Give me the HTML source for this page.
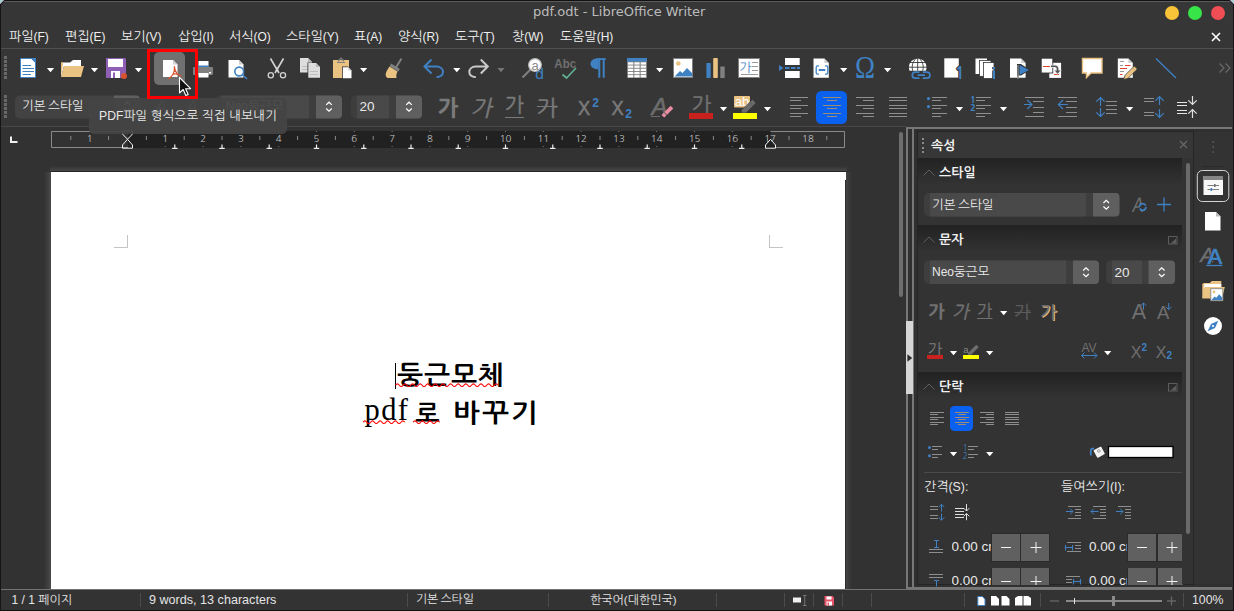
<!DOCTYPE html><html lang="ko"><head><meta charset="utf-8"><title>pdf.odt - LibreOffice Writer</title><style>
html,body{margin:0;padding:0;background:#000;}
body{width:1234px;height:611px;overflow:hidden;position:relative;font-family:"Liberation Sans","NanumGothic","Noto Sans CJK KR",sans-serif;font-size:13px;color:#e6e6e6;}
#win{position:absolute;left:0;top:0;width:1234px;height:611px;background:#363636;overflow:hidden;}
.abs{position:absolute;}
.t{position:absolute;white-space:nowrap;line-height:1;}
svg{position:absolute;overflow:visible;}
</style></head><body><div id="win">
<div class="t" style="left:533px;top:5.0px;font-size:13px;color:#bcbcbc;font-family:'DejaVu Sans','Liberation Sans',sans-serif;">pdf.odt - LibreOffice Writer</div><div class="abs" style="left:1165px;top:6px;width:14px;height:14px;background:#f9c339;border-radius:50%;"></div><div class="abs" style="left:1188px;top:6px;width:14px;height:14px;background:#37e549;border-radius:50%;"></div><div class="abs" style="left:1211px;top:6px;width:14px;height:14px;background:#f14d55;border-radius:50%;"></div>
<div class="t" style="left:9px;top:30.1px;font-size:13px;color:#f0f0f0;">파일<span style="font-size:0.92em">(F)</span></div><div class="t" style="left:65px;top:30.1px;font-size:13px;color:#f0f0f0;">편집<span style="font-size:0.92em">(E)</span></div><div class="t" style="left:121px;top:30.1px;font-size:13px;color:#f0f0f0;">보기<span style="font-size:0.92em">(V)</span></div><div class="t" style="left:178px;top:30.1px;font-size:13px;color:#f0f0f0;">삽입<span style="font-size:0.92em">(I)</span></div><div class="t" style="left:229px;top:30.1px;font-size:13px;color:#f0f0f0;">서식<span style="font-size:0.92em">(O)</span></div><div class="t" style="left:286px;top:30.1px;font-size:13px;color:#f0f0f0;">스타일<span style="font-size:0.92em">(Y)</span></div><div class="t" style="left:354px;top:30.1px;font-size:13px;color:#f0f0f0;">표<span style="font-size:0.92em">(A)</span></div><div class="t" style="left:398px;top:30.1px;font-size:13px;color:#f0f0f0;">양식<span style="font-size:0.92em">(R)</span></div><div class="t" style="left:455px;top:30.1px;font-size:13px;color:#f0f0f0;">도구<span style="font-size:0.92em">(T)</span></div><div class="t" style="left:512px;top:30.1px;font-size:13px;color:#f0f0f0;">창<span style="font-size:0.92em">(W)</span></div><div class="t" style="left:560px;top:30.1px;font-size:13px;color:#f0f0f0;">도움말<span style="font-size:0.92em">(H)</span></div><svg style="left:1211px;top:32px" width="10" height="10"><path d="M1 1L9 9M9 1L1 9" stroke="#fff" stroke-width="1.6" fill="none"/></svg><div class="abs" style="left:1px;top:48px;width:1232px;height:1px;background:#505050;"></div>
<svg style="left:0;top:0" width="1234" height="130" viewBox="0 0 1234 130"><rect x="4" y="56" width="3" height="3" fill="#686868"/><rect x="4" y="60" width="3" height="3" fill="#686868"/><rect x="4" y="64" width="3" height="3" fill="#686868"/><rect x="4" y="68" width="3" height="3" fill="#686868"/><rect x="4" y="72" width="3" height="3" fill="#686868"/><rect x="4" y="76" width="3" height="3" fill="#686868"/><path d="M20.5,58.5h11l4,4v15h-15z" fill="#ffffff" stroke="#3f81c3"/><path d="M30.500,58h5.500v5.500z" fill="#3f81c3"/><path d="M22.500,65.500h8.500M22.500,68.500h11.500M22.500,71.500h11.500M22.500,74.500h8.500" stroke="#3f81c3" stroke-width="1.200"/><path d="M46.9,68h7.2l-3.6,4.2z" fill="#ffffff"/><path d="M61,77v-13.5l2,-1h7l3,-2.5h8v6h-17z" fill="#fff"/><path d="M61,77l0,-14.5l2,-0.5v3l-1.5,8z" fill="#eac282"/><path d="M61,77l3,-11h20l-3,11z" fill="#eac282"/><path d="M90.9,68h7.2l-3.6,4.2z" fill="#ffffff"/><path d="M106,58h19l1,1v19h-20z" fill="#8f5fb5"/><rect x="108" y="59" width="15" height="8" fill="#fff"/><rect x="111" y="71" width="9" height="7" fill="#fff"/><rect x="113" y="72.5" width="2" height="5.5" fill="#8f5fb5"/><circle cx="124" cy="76" r="3" fill="#d9532c"/><path d="M134.9,68h7.2l-3.6,4.2z" fill="#ffffff"/><rect x="154" y="52" width="31" height="33" rx="5" fill="#707070"/><path d="M163,60h10l4.5,4.5v12.5h-14.500z" fill="#fff"/><path d="M173,60v4.500h4.500z" fill="#d0d0d0"/><path d="M174.400,66.600c0.300,3 -0.200,5.400 -1.400,7.600c-1,1.800 -2.500,3.400 -4.200,4.600M173,74.200c2.500,-0.700 5.500,0 8,1.700M174.400,66.600c0.200,2.500 1,4.800 2.400,6.600" stroke="#d9532c" stroke-width="1.200" fill="none" stroke-linecap="round"/><rect x="198.500" y="61" width="10" height="5" fill="#fff"/><path d="M198,65.500h11v2h-11z" fill="#3f81c3"/><rect x="193" y="67" width="20" height="8" rx="1" fill="#808080"/><rect x="198.500" y="73" width="10" height="4.500" fill="#fff"/><rect x="209" y="72" width="2" height="1.500" fill="#fff"/><path d="M228.5,60h10.5l4.5,4.5v13.0h-15z" fill="#ffffff"/><path d="M239.0,60v4.5h4.5z" fill="#d0d0d0"/><circle cx="239.200" cy="71.500" r="4.400" fill="#fff" stroke="#3f81c3" stroke-width="1.600"/><path d="M242.300,74.700l4.800,4.300" stroke="#3f81c3" stroke-width="1.600"/><path d="M270.500,58.500l8.500,14.500M283.500,58.500l-8.500,14.500" stroke="#d4d4d4" stroke-width="1.600" fill="none"/><path d="M277,66.500l-1.800,4.500l1.800,-1.500l1.800,1.500z" fill="#d4d4d4"/><circle cx="270.800" cy="75.300" r="2.600" fill="none" stroke="#d4d4d4" stroke-width="1.300"/><circle cx="283" cy="75.300" r="2.600" fill="none" stroke="#d4d4d4" stroke-width="1.300"/><path d="M300,58h8l4,4v10.5h-12z" fill="#dedede"/><path d="M308,58v4h4z" fill="#b8b8b8"/><path d="M302,66.500h8M302,69.500h8" stroke="#bdbdbd"/><path d="M307.500,62.500h8.500l4.500,4.500v11h-13z" fill="#333"/><path d="M308.3,63h7.699999999999999l4,4v10.7h-11.7z" fill="#dedede"/><path d="M316.0,63v4h4z" fill="#b8b8b8"/><path d="M310,71.500h8M310,74.500h8" stroke="#bdbdbd"/><rect x="333" y="60" width="16" height="18" fill="#eac282"/><path d="M337,62.500h8M338.500,61.500v-1.500h1.500c0,-2.500 2,-2.500 2,0h1.500v1.500" stroke="#808080" fill="none" stroke-width="1.200"/><path d="M342,66.500h6l4,4v8.500h-10z" fill="#333"/><path d="M342.8,67.3h5.499999999999999l3.2,3.2v7.8h-8.7z" fill="#ffffff"/><path d="M348.3,67.3v3.2h3.2z" fill="#c8c8c8"/><path d="M360.0,68h7.2l-3.6,4.2z" fill="#ffffff"/><path d="M401.500,58.500l-5.500,9" stroke="#808080" stroke-width="2"/><path d="M391.200,63.600l8.600,5.400l-1.500,2.600l-8.600,-5.400z" fill="#808080"/><path d="M389.500,66.500l8,5c-1,2 -1.500,4 -1,6.500h-9c-2.500,-1.500 -2,-5 -0.500,-7.500z" fill="#eac282"/><path d="M431.500,59.500l-7,7l7,7M424.500,66.500h12c4,0 6.500,2.500 6.500,5.500s-3,5.500 -6.500,5" stroke="#3f81c3" stroke-width="2" fill="none"/><path d="M453.2,68h7.2l-3.6,4.2z" fill="#ffffff"/><path d="M480.800,59.500l7,7l-7,7M487.800,66.500h-12c-4,0 -6.500,2.500 -6.500,5.500s3,5.500 6.500,5" stroke="#c9c9c9" stroke-width="2" fill="none"/><path d="M497.4,68h7.2l-3.6,4.2z" fill="#767676"/><path d="M530.500,69.500l-8,8" stroke="#808080" stroke-width="2"/><circle cx="535" cy="65" r="6.300" fill="#fff" stroke="#bdbdbd" stroke-width="1.300"/><text x="535" y="69.500" font-size="13" text-anchor="middle" fill="#8a8a8a" font-family="Liberation Sans,sans-serif">a</text><text x="539.500" y="79" font-size="15.500" text-anchor="middle" fill="#3f81c3" font-family="Liberation Sans,sans-serif">d</text><text x="565.200" y="68" font-size="13" font-weight="bold" text-anchor="middle" fill="#707070" font-family="Liberation Sans,sans-serif" textLength="21.700" lengthAdjust="spacingAndGlyphs">Abc</text><path d="M562.500,74.500l4,3.500l9.500,-10" stroke="#5fb090" stroke-width="1.700" fill="none"/><path d="M598.500,58.200c-5.500,0 -8,2.500 -8,5.500s2.500,5.500 8,5.500z" fill="#3f81c3"/><path d="M597,59.100h8.700" stroke="#3f81c3" stroke-width="1.800" fill="none"/><path d="M599.300,58.500v19.300M603.700,58.500v19.300" stroke="#3f81c3" stroke-width="2" fill="none"/><rect x="627" y="58" width="20" height="20" fill="#808080"/><rect x="627" y="58" width="20" height="3.500" fill="#3f81c3"/><rect x="628.00" y="62.30" width="5.300" height="2.300" fill="#fff"/><rect x="634.33" y="62.30" width="5.300" height="2.300" fill="#fff"/><rect x="640.66" y="62.30" width="5.300" height="2.300" fill="#fff"/><rect x="628.00" y="65.50" width="5.300" height="2.300" fill="#fff"/><rect x="634.33" y="65.50" width="5.300" height="2.300" fill="#fff"/><rect x="640.66" y="65.50" width="5.300" height="2.300" fill="#fff"/><rect x="628.00" y="68.70" width="5.300" height="2.300" fill="#fff"/><rect x="634.33" y="68.70" width="5.300" height="2.300" fill="#fff"/><rect x="640.66" y="68.70" width="5.300" height="2.300" fill="#fff"/><rect x="628.00" y="71.90" width="5.300" height="2.300" fill="#fff"/><rect x="634.33" y="71.90" width="5.300" height="2.300" fill="#fff"/><rect x="640.66" y="71.90" width="5.300" height="2.300" fill="#fff"/><rect x="628.00" y="75.10" width="5.300" height="2.300" fill="#fff"/><rect x="634.33" y="75.10" width="5.300" height="2.300" fill="#fff"/><rect x="640.66" y="75.10" width="5.300" height="2.300" fill="#fff"/><path d="M656.0,68h7.2l-3.6,4.2z" fill="#ffffff"/><rect x="673.500" y="58.500" width="19" height="19" fill="#fff" stroke="#808080"/><circle cx="678.300" cy="63.500" r="2.300" fill="#eac282"/><path d="M674.500,76.500l5.500,-5.500l2.500,2l4.500,-5l5,5v3.500z" fill="#3f81c3"/><rect x="706.400" y="63" width="4.300" height="15" fill="#3f81c3"/><rect x="713.200" y="58" width="4.600" height="20" rx="0.800" fill="#eac282"/><rect x="720.300" y="66.500" width="4.400" height="11.500" fill="#808080"/><rect x="738.500" y="58.500" width="21" height="19" fill="#fff" stroke="#808080"/><text x="745.500" y="71.500" font-size="12.500" text-anchor="middle" fill="#3f81c3" font-family="NanumGothic,sans-serif">가</text><path d="M752,62.500h6M752,66.500h6M752,70.500h6M741,74.500h17" stroke="#808080" stroke-width="0.800"/><rect x="785" y="58" width="14.700" height="7" fill="#fff"/><rect x="785" y="71" width="14.700" height="7" fill="#fff"/><path d="M785,68h15" stroke="#3f81c3" stroke-width="2" stroke-dasharray="4.500,1.500"/><path d="M779,65l4.500,3l-4.500,3z" fill="#3f81c3"/><path d="M813.5,58.5h10.8l4.5,4.5v14.8h-15.3z" fill="#ffffff"/><path d="M824.3,58.5v4.5h4.5z" fill="#cfcfcf"/><path d="M819,65.800h-1.300a1.500,1.500 0 0 0 -1.500,1.500v5.400a1.500,1.500 0 0 0 1.500,1.500h1.300M825,65.800h1.300a1.500,1.500 0 0 1 1.500,1.500v5.400a1.500,1.500 0 0 1 -1.500,1.500h-1.300" stroke="#3f81c3" fill="none" stroke-width="1.300"/><path d="M818.700,70h6.600" stroke="#3f81c3" stroke-width="2"/><path d="M840.1,68h7.2l-3.6,4.2z" fill="#ffffff"/><text x="865" y="77.900" font-size="32.500" text-anchor="middle" fill="#3f81c3" font-family="Liberation Serif,serif" textLength="20" lengthAdjust="spacingAndGlyphs">Ω</text><path d="M884.0,68h7.2l-3.6,4.2z" fill="#ffffff"/><clipPath id="gc"><rect x="905" y="55" width="26" height="15.700"/></clipPath><g clip-path="url(#gc)"><circle cx="917.700" cy="67.300" r="8.800" fill="#fff"/><path d="M908,67.200h20M909.500,62.500h16.500M917.700,58v13M913.200,72c-2,-4.500 -1,-10 2.800,-13.500M922.200,72c2,-4.500 1,-10 -2.800,-13.500" stroke="#363636" stroke-width="0.900" fill="none"/></g><path d="M919.500,72.200h-4.200a3,3 0 0 0 0,6h4.200M922.700,72.200h4.200a3,3 0 0 1 0,6h-4.200M917.500,75.200h7.500" stroke="#3f81c3" fill="none" stroke-width="1.700"/><path d="M944.300,58.300h14.500v19.300h-14.500z" fill="#fff"/><text x="959.800" y="79" font-size="17" font-weight="bold" text-anchor="middle" fill="#3f81c3" stroke="#363636" stroke-width="2.200" paint-order="stroke" font-family="NanumGothic,sans-serif">1</text><rect x="975.500" y="58.500" width="11.500" height="15.500" fill="#fff"/><rect x="979.500" y="60.500" width="11.500" height="15.800" fill="#fff" stroke="#363636" stroke-width="0.800"/><rect x="983.500" y="62.500" width="10.500" height="16" fill="#fff" stroke="#363636" stroke-width="0.800"/><path d="M994,67v2.200M994,70.500v8.500" stroke="#363636" stroke-width="3.600"/><path d="M994,67v2.200M994,70.500v8.500" stroke="#3f81c3" stroke-width="2"/><path d="M1010,58.5h11.1l4.5,4.5v14.8h-15.6z" fill="#ffffff"/><path d="M1021.0999999999999,58.5v4.5h4.5z" fill="#cfcfcf"/><path d="M1017,64h4l9,6l-9,5.500h-4z" fill="#333"/><path d="M1018,65v14" stroke="#808080" stroke-width="1.600"/><path d="M1019.500,65l9.500,5l-9.500,5z" fill="#3f81c3"/><rect x="1049.300" y="62.800" width="11.800" height="15.100" fill="#fff"/><rect x="1041.200" y="58.200" width="11.600" height="14.800" fill="#fff" stroke="#363636" stroke-width="0.900"/><path d="M1043,66.500h7M1054,74.500h5" stroke="#e0452c" stroke-width="1"/><path d="M1051,66.300h4c2,0 2.600,1 2.600,3v2" stroke="#e8e8e8" stroke-width="3" fill="none"/><path d="M1053.300,70h8.400l-4.200,4.800z" fill="#e8e8e8"/><path d="M1051,66.300h4c2,0 2.600,1 2.600,3v2" stroke="#555" stroke-width="1.600" fill="none"/><path d="M1054.800,70.600h5.600l-2.800,3.200z" fill="#555"/><path d="M1082.500,58.500h19.500v14.500h-11l-4.500,4.500v-4.500h-4z" fill="#fff" stroke="#eac282" stroke-width="1.400"/><path d="M1117.8,58.5h10.5l4.5,4.5v14.8h-15z" fill="#ffffff"/><path d="M1128.3,58.5v4.5h4.5z" fill="#cfcfcf"/><path d="M1120,61.500h4M1120,65.500h3M1120,71.500h4" stroke="#9a9a9a" stroke-width="1"/><path d="M1125,65.500h5.500M1120,68.500h7M1120,74.500h2.500" stroke="#e0452c" stroke-width="1.100"/><path d="M1134.300,66l3,3l-9.300,9.300l-4.300,1.300l1.300,-4.300z" fill="#eac282" stroke="#363636" stroke-width="0.700"/><path d="M1132.600,67.700l3,3" stroke="#c9a468" stroke-width="0.900"/><path d="M1156,58.500l20,19.500" stroke="#3f81c3" stroke-width="1.300"/><path d="M1219.500,63.500l4.500,4.500l-4.500,4.500M1225.500,63.500l4.500,4.500l-4.500,4.500" stroke="#686868" stroke-width="1.300" fill="none"/></svg>
<svg style="left:0;top:0" width="1234" height="130" viewBox="0 0 1234 130"><rect x="4" y="95" width="3" height="3" fill="#686868"/><rect x="4" y="99" width="3" height="3" fill="#686868"/><rect x="4" y="103" width="3" height="3" fill="#686868"/><rect x="4" y="107" width="3" height="3" fill="#686868"/><rect x="4" y="111" width="3" height="3" fill="#686868"/><rect x="4" y="115" width="3" height="3" fill="#686868"/><rect x="15" y="95.500" width="125" height="23" rx="5" fill="#434343"/><path d="M114,95.500h22a4,4 0 0 1 4,4v15a4,4 0 0 1 -4,4h-22z" fill="#5f5f5f"/><path d="M124.2,104.9l2.800,-2.700l2.800,2.700M124.2,108.5l2.800,2.700l2.800,-2.700" stroke="#ffffff" stroke-width="1.200" fill="none"/><text x="161" y="113" font-size="18" text-anchor="middle" fill="#8a8a8a" font-family="Liberation Sans,sans-serif" font-style="italic">A</text><text x="192" y="113" font-size="18" text-anchor="middle" fill="#8a8a8a" font-family="Liberation Sans,sans-serif" font-style="italic">A</text><rect x="215" y="95.500" width="127" height="23" rx="5" fill="#3e3e3e"/><rect x="221" y="95.500" width="88" height="23" fill="#494949"/><path d="M316,95.500h22a4,4 0 0 1 4,4v15a4,4 0 0 1 -4,4h-22z" fill="#5f5f5f"/><path d="M326.2,104.9l2.800,-2.700l2.800,2.700M326.2,108.5l2.800,2.700l2.800,-2.700" stroke="#ffffff" stroke-width="1.200" fill="none"/><rect x="351" y="95.500" width="71" height="23" rx="5" fill="#3e3e3e"/><rect x="357" y="95.500" width="32" height="23" fill="#494949"/><path d="M396,95.500h22a4,4 0 0 1 4,4v15a4,4 0 0 1 -4,4h-22z" fill="#5f5f5f"/><path d="M406.2,104.9l2.800,-2.700l2.800,2.700M406.2,108.5l2.800,2.700l2.800,-2.700" stroke="#ffffff" stroke-width="1.200" fill="none"/><text x="448" y="115.500" font-size="22" font-weight="800" text-anchor="middle" fill="#7a7a7a" font-family="NanumGothic,sans-serif">가</text><text transform="translate(481,115.500) skewX(-13)" x="0" y="0" font-size="22" text-anchor="middle" fill="#7a7a7a" stroke="#7a7a7a" stroke-width="0.500" font-family="NanumGothic,sans-serif">가</text><text x="514.500" y="112" font-size="20" text-anchor="middle" fill="#7a7a7a" stroke="#7a7a7a" stroke-width="0.500" font-family="NanumGothic,sans-serif">가</text><path d="M505,117.500h19" stroke="#7a7a7a" stroke-width="1"/><text x="547" y="115.500" font-size="22" text-anchor="middle" fill="#7a7a7a" stroke="#7a7a7a" stroke-width="0.500" font-family="NanumGothic,sans-serif">가</text><path d="M537,106.500h20.500" stroke="#7a7a7a" stroke-width="1"/><text x="584" y="115" font-size="19.500" text-anchor="middle" fill="#7a7a7a" stroke="#7a7a7a" stroke-width="0.500" font-family="Liberation Sans,sans-serif" textLength="12.200" lengthAdjust="spacingAndGlyphs">X</text><text x="595.600" y="106.600" font-size="12" font-weight="bold" text-anchor="middle" fill="#3f81c3" font-family="Liberation Sans,sans-serif">2</text><text x="617.500" y="115" font-size="19.500" text-anchor="middle" fill="#7a7a7a" stroke="#7a7a7a" stroke-width="0.500" font-family="Liberation Sans,sans-serif" textLength="12.200" lengthAdjust="spacingAndGlyphs">X</text><text x="628.600" y="117.800" font-size="12" font-weight="bold" text-anchor="middle" fill="#3f81c3" font-family="Liberation Sans,sans-serif">2</text><text x="659.500" y="114.500" font-size="24" text-anchor="middle" fill="#6c6c6c" font-family="Liberation Sans,sans-serif" font-style="italic" stroke="#6c6c6c" stroke-width="0.600">A</text><path d="M651,116.500h9" stroke="#6c6c6c"/><path d="M670.600,105.800l2.700,2.700l-6.200,6.200l-2.700,-2.700z" fill="#ea8ca2"/><path d="M663.700,112.700l2.700,2.700l-2.200,2.200l-2.700,-2.700z" fill="#ea8ca2"/><text x="701.500" y="112" font-size="20.500" text-anchor="middle" fill="#727272" stroke="#727272" stroke-width="0.500" font-family="NanumGothic,sans-serif">가</text><rect x="689" y="113" width="24" height="6" fill="#c9211e"/><path d="M719.9,107h7.2l-3.6,4.2z" fill="#ffffff"/><rect x="734" y="96" width="16" height="11.500" rx="0.800" fill="#eac282"/><text x="742" y="106" font-size="13" text-anchor="middle" fill="#fff" font-family="Liberation Sans,sans-serif">ab</text><path d="M752.500,99.500l3.500,3.500l-10,10h-4.500v-3z" fill="#6a6a6a" stroke="#333" stroke-width="0.500"/><path d="M749.700,102.300l3.500,3.500" stroke="#555" stroke-width="0.800"/><rect x="733" y="113" width="24" height="6" fill="#ffff00"/><path d="M763.9,107h7.2l-3.6,4.2z" fill="#ffffff"/><path d="M790,97.5H808M790,105.5H808M790,113.5H808" stroke="#8e8e8e" stroke-width="1" fill="none"/><path d="M790,100.5H801M790,108.5H801M790,116.5H801" stroke="#8e8e8e" stroke-width="1" fill="none"/><rect x="816" y="91" width="31" height="33" rx="5.500" fill="#0a61f0"/><path d="M823,97.5H841M823,105.5H841M823,113.5H841" stroke="#9c8c74" stroke-width="1" fill="none"/><path d="M827,100.5H837M827,108.5H837M827,116.5H837" stroke="#9c8c74" stroke-width="1" fill="none"/><path d="M856,97.5H874M856,105.5H874M856,113.5H874" stroke="#8e8e8e" stroke-width="1" fill="none"/><path d="M863,100.5H874M863,108.5H874M863,116.5H874" stroke="#8e8e8e" stroke-width="1" fill="none"/><path d="M889,97.5H907M889,105.5H907M889,113.5H907M889,100.5H907M889,108.5H907M889,116.5H907" stroke="#8e8e8e" stroke-width="1" fill="none"/><circle cx="928.500" cy="98.600" r="1.600" fill="#3f81c3"/><circle cx="928.500" cy="106.600" r="1.600" fill="#3f81c3"/><path d="M932,97.5H947M932,105.5H947M932,113.5H947" stroke="#8e8e8e" stroke-width="1" fill="none"/><path d="M932,100.5H941M932,108.5H941M932,116.5H941" stroke="#8e8e8e" stroke-width="1" fill="none"/><path d="M955.9,107h7.2l-3.6,4.2z" fill="#ffffff"/><text x="973" y="103" font-size="9" font-weight="800" text-anchor="middle" fill="#3f81c3" font-family="NanumGothic,sans-serif">1</text><text x="973" y="111" font-size="9" font-weight="800" text-anchor="middle" fill="#3f81c3" font-family="NanumGothic,sans-serif">2</text><path d="M976,97.5H991M976,105.5H991M976,113.5H991" stroke="#8e8e8e" stroke-width="1" fill="none"/><path d="M976,100.5H985M976,108.5H985M976,116.5H985" stroke="#8e8e8e" stroke-width="1" fill="none"/><path d="M999.9,107h7.2l-3.6,4.2z" fill="#ffffff"/><path d="M1025,97.5H1044M1025,116.5H1044" stroke="#8e8e8e" stroke-width="1" fill="none"/><path d="M1033,101.5H1044M1033,107.5H1044M1033,112.5H1044" stroke="#8e8e8e" stroke-width="1" fill="none"/><path d="M1024,104.500h8M1027.300,100l4.600,4.500l-4.600,4.500" stroke="#3f81c3" fill="none" stroke-width="1.200"/><path d="M1058,97.5H1077M1058,116.5H1077" stroke="#8e8e8e" stroke-width="1" fill="none"/><path d="M1066,101.5H1077M1066,107.5H1077M1066,112.5H1077" stroke="#8e8e8e" stroke-width="1" fill="none"/><path d="M1068,104.500h-9.500M1063,100l-4.600,4.500l4.600,4.500" stroke="#3f81c3" fill="none" stroke-width="1.200"/><path d="M1100.500,97.500v8.500M1096.300,101.700l4.200,-4.200l4.200,4.200M1100.500,108v8.500M1096.300,112.300l4.200,4.200l4.200,-4.200" stroke="#3f81c3" fill="none" stroke-width="1.200"/><path d="M1106,101.5H1117M1106,105.5H1117M1106,109.5H1117M1106,113.5H1117" stroke="#8e8e8e" stroke-width="1" fill="none"/><path d="M1126.0,107h7.2l-3.6,4.2z" fill="#ffffff"/><path d="M1144,98.5H1154M1144,101.5H1154M1144,112.5H1154M1144,115.5H1154" stroke="#8e8e8e" stroke-width="1" fill="none"/><path d="M1159.500,96.700v8.300M1155.300,100.900l4.200,-4.200l4.200,4.200M1159.500,109v8.300M1155.300,113.100l4.200,4.200l4.200,-4.200" stroke="#3f81c3" fill="none" stroke-width="1.200"/><path d="M1177,102.5H1187M1177,105.5H1187M1177,110.5H1187M1177,113.5H1187" stroke="#e6e6e6" stroke-width="1.1" fill="none"/><path d="M1192.500,96v8.500M1188.300,100.300l4.200,4.200l4.200,-4.200M1192.500,118v-8.500M1188.300,113.700l4.200,-4.200l4.200,4.200" stroke="#e0e0e0" fill="none" stroke-width="1.200"/></svg><div class="t" style="left:22px;top:100.3px;font-size:12.6px;color:#e8e8e8;word-spacing:-1px;">기본 스타일</div><div class="t" style="left:226px;top:100.3px;font-size:12.6px;color:#e8e8e8;"><span style="font-size:0.95em">Neo</span>둥근모</div><div class="t" style="left:359.5px;top:100.3px;font-size:13.5px;color:#e8e8e8;">20</div>
<div class="abs" style="left:0px;top:127px;width:906px;height:462px;background:#323232;"></div><div class="abs" style="left:0px;top:126px;width:906px;height:1px;background:#484848;"></div><svg style="left:0;top:0" width="906" height="172" viewBox="0 0 906 172"><path d="M11,136.500v5.500h6.500" stroke="#f0f0f0" stroke-width="2" fill="none"/><rect x="128" y="131" width="642.500" height="17" fill="#212121"/><path d="M128,131.500H51.500v16H128" fill="none" stroke="#8a8a8a"/><path d="M770.500,131.500h74v16h-74" fill="none" stroke="#8a8a8a"/><path d="M70.8,136v4M108.6,136v4M146.4,136v4M184.2,136v4M222.0,136v4M259.8,136v4M297.6,136v4M335.4,136v4M373.2,136v4M411.0,136v4M448.8,136v4M486.6,136v4M524.4,136v4M562.2,136v4M600.0,136v4M637.8,136v4M675.6,136v4M713.4,136v4M751.2,136v4M789.0,136v4M826.8,136v4" stroke="#8a8a8a" stroke-width="1"/><path d="M164.8,146.500h1M164.8,131.500h1M202.6,146.500h1M202.6,131.500h1M240.4,146.500h1M240.4,131.500h1M278.2,146.500h1M278.2,131.500h1M316.0,146.500h1M316.0,131.500h1M353.8,146.500h1M353.8,131.500h1M391.6,146.500h1M391.6,131.500h1M429.4,146.500h1M429.4,131.500h1M467.2,146.500h1M467.2,131.500h1M505.0,146.500h1M505.0,131.500h1M542.8,146.500h1M542.8,131.500h1M580.6,146.500h1M580.6,131.500h1M618.4,146.500h1M618.4,131.500h1M656.2,146.500h1M656.2,131.500h1M694.0,146.500h1M694.0,131.500h1M731.8,146.500h1M731.8,131.500h1" stroke="#777" stroke-width="1"/><path d="M174.8,144.500v4M172.1,148.400h5.400M222.0,144.500v4M219.3,148.400h5.400M269.2,144.500v4M266.6,148.400h5.400M316.5,144.500v4M313.8,148.400h5.400M363.8,144.500v4M361.1,148.400h5.400M411.0,144.500v4M408.3,148.400h5.400M458.2,144.500v4M455.6,148.400h5.400M505.5,144.500v4M502.8,148.400h5.400M552.8,144.500v4M550.0,148.400h5.400M600.0,144.500v4M597.3,148.400h5.400M647.2,144.500v4M644.5,148.400h5.400M694.5,144.500v4M691.8,148.400h5.400M741.8,144.500v4M739.0,148.400h5.400" stroke="#f0f0f0" stroke-width="1.200"/><path d="M122.500,131h10v3l-5,5.300l-5,-5.300zM127.500,139.300l5,5.700v3.200h-10v-3.200z" fill="none" stroke="#f2f2f2" stroke-width="1"/><path d="M770.500,139.300l5,5.700v3.200h-10v-3.200z" fill="#212121" stroke="#f2f2f2" stroke-width="1"/></svg><div class="t" style="left:79.7px;width:20px;text-align:center;top:133.500px;font-size:9.700px;color:#c0c0c0;font-family:NanumGothic,sans-serif;">1</div><div class="t" style="left:155.3px;width:20px;text-align:center;top:133.500px;font-size:9.700px;color:#c0c0c0;font-family:NanumGothic,sans-serif;">1</div><div class="t" style="left:193.1px;width:20px;text-align:center;top:133.500px;font-size:9.700px;color:#c0c0c0;font-family:NanumGothic,sans-serif;">2</div><div class="t" style="left:230.9px;width:20px;text-align:center;top:133.500px;font-size:9.700px;color:#c0c0c0;font-family:NanumGothic,sans-serif;">3</div><div class="t" style="left:268.7px;width:20px;text-align:center;top:133.500px;font-size:9.700px;color:#c0c0c0;font-family:NanumGothic,sans-serif;">4</div><div class="t" style="left:306.5px;width:20px;text-align:center;top:133.500px;font-size:9.700px;color:#c0c0c0;font-family:NanumGothic,sans-serif;">5</div><div class="t" style="left:344.3px;width:20px;text-align:center;top:133.500px;font-size:9.700px;color:#c0c0c0;font-family:NanumGothic,sans-serif;">6</div><div class="t" style="left:382.1px;width:20px;text-align:center;top:133.500px;font-size:9.700px;color:#c0c0c0;font-family:NanumGothic,sans-serif;">7</div><div class="t" style="left:419.9px;width:20px;text-align:center;top:133.500px;font-size:9.700px;color:#c0c0c0;font-family:NanumGothic,sans-serif;">8</div><div class="t" style="left:457.7px;width:20px;text-align:center;top:133.500px;font-size:9.700px;color:#c0c0c0;font-family:NanumGothic,sans-serif;">9</div><div class="t" style="left:495.5px;width:20px;text-align:center;top:133.500px;font-size:9.700px;color:#c0c0c0;font-family:NanumGothic,sans-serif;">10</div><div class="t" style="left:533.3px;width:20px;text-align:center;top:133.500px;font-size:9.700px;color:#c0c0c0;font-family:NanumGothic,sans-serif;">11</div><div class="t" style="left:571.1px;width:20px;text-align:center;top:133.500px;font-size:9.700px;color:#c0c0c0;font-family:NanumGothic,sans-serif;">12</div><div class="t" style="left:608.9px;width:20px;text-align:center;top:133.500px;font-size:9.700px;color:#c0c0c0;font-family:NanumGothic,sans-serif;">13</div><div class="t" style="left:646.7px;width:20px;text-align:center;top:133.500px;font-size:9.700px;color:#c0c0c0;font-family:NanumGothic,sans-serif;">14</div><div class="t" style="left:684.5px;width:20px;text-align:center;top:133.500px;font-size:9.700px;color:#c0c0c0;font-family:NanumGothic,sans-serif;">15</div><div class="t" style="left:722.3px;width:20px;text-align:center;top:133.500px;font-size:9.700px;color:#c0c0c0;font-family:NanumGothic,sans-serif;">16</div><div class="t" style="left:760.1px;width:20px;text-align:center;top:133.500px;font-size:9.700px;color:#c0c0c0;font-family:NanumGothic,sans-serif;">17</div><div class="t" style="left:797.9px;width:20px;text-align:center;top:133.500px;font-size:9.700px;color:#c0c0c0;font-family:NanumGothic,sans-serif;">18</div>
<div class="abs" style="left:44px;top:172px;width:7px;height:417px;background:linear-gradient(90deg,#323232,#4a4a4a);"></div><div class="abs" style="left:846px;top:172px;width:6px;height:417px;background:linear-gradient(90deg,#444444,#323232);"></div><div class="abs" style="left:50px;top:166px;width:797px;height:5px;background:linear-gradient(#323232,#484848);"></div><div class="abs" style="left:51px;top:171px;width:795px;height:1px;background:#262626;"></div><div class="abs" style="left:51px;top:172px;width:795px;height:417px;background:#ffffff;"></div><div class="abs" style="left:845px;top:180px;width:1px;height:409px;background:#2c2c2c;"></div><div class="abs" style="left:114px;top:247px;width:14px;height:1px;background:#c4c4c4;"></div><div class="abs" style="left:127px;top:235px;width:1px;height:13px;background:#c4c4c4;"></div><div class="abs" style="left:769px;top:247px;width:14px;height:1px;background:#c4c4c4;"></div><div class="abs" style="left:769px;top:235px;width:1px;height:13px;background:#c4c4c4;"></div><div class="t" style="left:397.300px;top:362.700px;font-size:25.700px;color:#000;font-family:'NanumGothic','Noto Sans CJK KR',sans-serif;font-weight:bold;letter-spacing:2.500px;transform-origin:0 0;letter-spacing:1px;transform:scaleX(1.072);">둥근모체</div><div class="abs" style="left:395px;top:363px;width:1px;height:26px;background:#000;"></div><div class="t" style="left:364.500px;top:395px;font-size:30.500px;letter-spacing:1.400px;color:#000;font-family:'Liberation Serif',serif;">pdf</div><div class="t" style="left:415.200px;top:401.500px;font-size:25.700px;color:#000;font-family:'NanumGothic','Noto Sans CJK KR',sans-serif;font-weight:bold;letter-spacing:2.500px;transform-origin:0 0;">로</div><div class="t" style="left:452.700px;top:401px;font-size:25.700px;color:#000;font-family:'NanumGothic','Noto Sans CJK KR',sans-serif;font-weight:bold;letter-spacing:2.500px;transform-origin:0 0;letter-spacing:2px;transform:scaleX(1.110);">바꾸기</div><svg style="left:0;top:0" width="906" height="600" viewBox="0 0 906 600"><path d="M395.5,385.2q1.900,-2.6 3.800,0q1.900,2.6 3.800,0q1.900,-2.6 3.800,0q1.900,2.6 3.800,0q1.900,-2.6 3.800,0q1.900,2.6 3.800,0q1.900,-2.6 3.800,0q1.900,2.6 3.800,0q1.900,-2.6 3.800,0q1.900,2.6 3.800,0q1.900,-2.6 3.800,0q1.900,2.6 3.800,0q1.900,-2.6 3.800,0q1.900,2.6 3.800,0q1.900,-2.6 3.800,0q1.900,2.6 3.800,0q1.900,-2.6 3.800,0q1.900,2.6 3.800,0q1.900,-2.6 3.800,0q1.900,2.6 3.800,0q1.900,-2.6 3.800,0q1.900,2.6 3.800,0q1.900,-2.6 3.800,0q1.900,2.6 3.800,0q1.900,-2.6 3.800,0q1.900,2.6 3.800,0q1.900,-2.6 3.800,0" stroke="#ff0000" stroke-width="1.100" fill="none"/><path d="M363,422.2q1.900,-2.6 3.800,0q1.900,2.6 3.800,0q1.900,-2.6 3.800,0q1.900,2.6 3.800,0q1.900,-2.6 3.800,0q1.900,2.6 3.800,0q1.900,-2.6 3.800,0q1.900,2.6 3.800,0q1.900,-2.6 3.800,0q1.900,2.6 3.800,0q1.900,-2.6 3.800,0" stroke="#ff0000" stroke-width="1.100" fill="none"/><path d="M413,422.2q1.900,-2.6 3.800,0q1.900,2.6 3.800,0q1.900,-2.6 3.800,0q1.900,2.6 3.800,0q1.900,-2.6 3.800,0q1.900,2.6 3.800,0q1.900,-2.6 3.800,0" stroke="#ff0000" stroke-width="1.100" fill="none"/></svg><div class="abs" style="left:899px;top:132px;width:4px;height:165px;background:#6e6e6e;border-radius:2px;"></div>
<div class="abs" style="left:906px;top:127px;width:326px;height:2px;background:#777777;"></div><div class="abs" style="left:908px;top:129px;width:324px;height:460px;background:#303030;"></div><div class="abs" style="left:906px;top:127px;width:2px;height:462px;background:#777777;"></div><div class="abs" style="left:912px;top:127px;width:2px;height:462px;background:#777777;"></div><div class="abs" style="left:917px;top:131px;width:277px;height:454px;background:#252525;"></div><div class="abs" style="left:906px;top:321px;width:7px;height:73px;background:#d6d6d6;"></div><svg style="left:907px;top:353.500px" width="6" height="8"><path d="M0.400,0.300l4.800,3.700l-4.800,3.700z" fill="#2c2c2c"/></svg><div class="abs" style="left:918px;top:132px;width:275px;height:26px;background:#373737;"></div><div class="abs" style="left:922px;top:138.0px;width:2px;height:2px;background:#8a8a8a;"></div><div class="abs" style="left:922px;top:142.3px;width:2px;height:2px;background:#8a8a8a;"></div><div class="abs" style="left:922px;top:146.6px;width:2px;height:2px;background:#8a8a8a;"></div><div class="abs" style="left:922px;top:150.9px;width:2px;height:2px;background:#8a8a8a;"></div><div class="t" style="left:931px;top:139.1px;font-size:13px;color:#f2f2f2;font-weight:bold;">속성</div><svg style="left:1179px;top:140px" width="9" height="9"><path d="M1,1l7,7M8,1l-7,7" stroke="#6a6a6a" stroke-width="1.100"/></svg><div class="abs" style="left:918px;top:158px;width:264px;height:426px;background:#333333;"></div><div class="abs" style="left:918px;top:158px;width:264px;height:27px;background:linear-gradient(#222222,#333333);"></div><svg style="left:923px;top:169px" width="12" height="7"><path d="M0.500,6.500l5.500,-5.500l5.500,5.500" stroke="#5e5e5e" stroke-width="1" fill="none"/></svg><div class="t" style="left:939px;top:165.6px;font-size:13px;color:#f2f2f2;font-weight:bold;">스타일</div><div class="abs" style="left:918px;top:225px;width:264px;height:27px;background:linear-gradient(#222222,#333333);"></div><svg style="left:923px;top:236px" width="12" height="7"><path d="M0.500,6.500l5.500,-5.500l5.500,5.500" stroke="#5e5e5e" stroke-width="1" fill="none"/></svg><div class="t" style="left:939px;top:232.6px;font-size:13px;color:#f2f2f2;font-weight:bold;">문자</div><svg style="left:1168px;top:236px" width="10" height="9"><rect x="0.500" y="0.500" width="8.500" height="7.500" fill="none" stroke="#5c5c5c"/><path d="M8,2.500v5h-5.500z" fill="#5c5c5c"/></svg><div class="abs" style="left:918px;top:372px;width:264px;height:27px;background:linear-gradient(#222222,#333333);"></div><svg style="left:923px;top:383px" width="12" height="7"><path d="M0.500,6.500l5.500,-5.500l5.500,5.500" stroke="#5e5e5e" stroke-width="1" fill="none"/></svg><div class="t" style="left:939px;top:379.6px;font-size:13px;color:#f2f2f2;font-weight:bold;">단락</div><svg style="left:1168px;top:383px" width="10" height="9"><rect x="0.500" y="0.500" width="8.500" height="7.500" fill="none" stroke="#5c5c5c"/><path d="M8,2.500v5h-5.500z" fill="#5c5c5c"/></svg><svg style="left:0;top:0" width="1234" height="586" viewBox="0 0 1234 586"><rect x="924" y="193" width="195.5" height="23.5" rx="5" fill="#3e3e3e"/><rect x="930" y="193" width="156" height="23.5" fill="#494949"/><path d="M1093,193h22.5a4,4 0 0 1 4,4v15.5a4,4 0 0 1 -4,4h-22.5z" fill="#5f5f5f"/><path d="M1103.45,202.95l2.800,-2.700l2.800,2.700M1103.45,206.55l2.800,2.700l2.800,-2.700" stroke="#ffffff" stroke-width="1.200" fill="none"/><text transform="translate(1137.300,211.800) skewX(-9)" x="0" y="0" font-size="21" text-anchor="middle" fill="#6e6e6e" font-family="Liberation Sans,sans-serif" textLength="11" lengthAdjust="spacingAndGlyphs">A</text><circle cx="1142.700" cy="207" r="3.300" fill="#333333" stroke="#3f81c3" stroke-width="1.800" stroke-dasharray="8.500,1.900"/><path d="M1157,204.500h14M1164,197.500v14" stroke="#3f81c3" stroke-width="1.300"/><rect x="924" y="260.5" width="175" height="23.5" rx="5" fill="#3e3e3e"/><rect x="930" y="260.5" width="136" height="23.5" fill="#494949"/><path d="M1073,260.5h22a4,4 0 0 1 4,4v15.5a4,4 0 0 1 -4,4h-22z" fill="#5f5f5f"/><path d="M1083.2,270.45l2.800,-2.700l2.800,2.700M1083.2,274.05l2.800,2.700l2.800,-2.700" stroke="#ffffff" stroke-width="1.200" fill="none"/><rect x="1106" y="260.5" width="69" height="23.5" rx="5" fill="#3e3e3e"/><rect x="1112" y="260.5" width="30" height="23.5" fill="#494949"/><path d="M1148.5,260.5h22.5a4,4 0 0 1 4,4v15.5a4,4 0 0 1 -4,4h-22.5z" fill="#5f5f5f"/><path d="M1158.95,270.45l2.800,-2.700l2.800,2.700M1158.95,274.05l2.800,2.700l2.800,-2.700" stroke="#ffffff" stroke-width="1.200" fill="none"/><text x="936.700" y="318" font-size="17.500" font-weight="800" text-anchor="middle" fill="#707070" font-family="NanumGothic,sans-serif">가</text><text transform="translate(960.500,318) skewX(-13)" x="0" y="0" font-size="17.500" text-anchor="middle" fill="#707070" stroke="#707070" stroke-width="0.550" font-family="NanumGothic,sans-serif">가</text><text x="984.700" y="315.500" font-size="16" text-anchor="middle" fill="#707070" stroke="#707070" stroke-width="0.300" font-family="NanumGothic,sans-serif">가</text><path d="M977,318.500h15.500" stroke="#707070"/><path d="M1000.1,311h7.2l-3.6,4.2z" fill="#ffffff"/><text x="1022.500" y="318" font-size="17.500" text-anchor="middle" fill="#5c5c5c" stroke="#5c5c5c" stroke-width="0.300" font-family="NanumGothic,sans-serif">가</text><path d="M1014.500,312.500h16.500" stroke="#5c5c5c"/><text x="1049.200" y="318.700" font-size="17" text-anchor="middle" fill="#eac282" stroke="#eac282" stroke-width="0.500" font-family="NanumGothic,sans-serif">가</text><text x="1048.200" y="317.800" font-size="17" text-anchor="middle" fill="#6e6e6e" stroke="#6e6e6e" stroke-width="0.500" font-family="NanumGothic,sans-serif">가</text><text x="1139" y="318.800" font-size="21.500" text-anchor="middle" fill="#707070" font-family="Liberation Sans,sans-serif">A</text><path d="M1143.5,303V309.7M1140.7,305.8L1143.5,303L1146.3,305.8" stroke="#3f81c3" stroke-width="1" fill="none"/><text x="1163.200" y="318.800" font-size="18.500" text-anchor="middle" fill="#707070" font-family="Liberation Sans,sans-serif">A</text><path d="M1168.7,303V309.7M1165.9,306.9L1168.7,309.7L1171.5,306.9" stroke="#3f81c3" stroke-width="1" fill="none"/><text x="935" y="355" font-size="15.500" text-anchor="middle" fill="#7c7c7c" font-family="NanumGothic,sans-serif">가</text><rect x="927" y="355" width="16" height="4" fill="#c9211e"/><path d="M949.9,351h7.2l-3.6,4.2z" fill="#ffffff"/><text x="966" y="352.500" font-size="9.500" text-anchor="middle" fill="#8a8a8a" font-family="Liberation Sans,sans-serif">a</text><path d="M976.300,344.800l2.400,2.400l-7.500,7.500h-3.200v-1.800z" fill="#6e6e6e"/><rect x="963" y="355" width="16" height="4" fill="#ffff00"/><path d="M986.0,351h7.2l-3.6,4.2z" fill="#ffffff"/><text x="1089" y="352" font-size="12" text-anchor="middle" fill="#707070" font-family="Liberation Sans,sans-serif">AV</text><path d="M1081.500,355.500h15.500M1084.500,352.500l-3,3l3,3M1094,352.500l3,3l-3,3" stroke="#3f81c3" fill="none"/><path d="M1104.1000000000001,351h7.2l-3.6,4.2z" fill="#ffffff"/><text x="1136.200" y="357.600" font-size="16" text-anchor="middle" fill="#707070" font-family="Liberation Sans,sans-serif">X</text><text x="1144.300" y="350.700" font-size="10" font-weight="bold" text-anchor="middle" fill="#3f81c3" font-family="Liberation Sans,sans-serif">2</text><text x="1161.200" y="357.600" font-size="16" text-anchor="middle" fill="#707070" font-family="Liberation Sans,sans-serif">X</text><text x="1169.200" y="358.800" font-size="10" font-weight="bold" text-anchor="middle" fill="#3f81c3" font-family="Liberation Sans,sans-serif">2</text><path d="M930,412.5H944M930,417.5H944M930,422.5H944" stroke="#8e8e8e" stroke-width="1" fill="none"/><path d="M930,414.5H938M930,419.5H938M930,424.5H938" stroke="#8e8e8e" stroke-width="1" fill="none"/><rect x="950" y="406" width="23" height="25" rx="4.500" fill="#0a61f0"/><path d="M955,412.5H969M955,417.5H969M955,422.5H969" stroke="#9c8c74" stroke-width="1" fill="none"/><path d="M958,414.5H966M958,419.5H966M958,424.5H966" stroke="#9c8c74" stroke-width="1" fill="none"/><path d="M980,412.5H994M980,417.5H994M980,422.5H994" stroke="#8e8e8e" stroke-width="1" fill="none"/><path d="M986,414.5H994M986,419.5H994M986,424.5H994" stroke="#8e8e8e" stroke-width="1" fill="none"/><path d="M1005,412.5H1019M1005,417.5H1019M1005,422.5H1019M1005,414.5H1019M1005,419.5H1019M1005,424.5H1019" stroke="#8e8e8e" stroke-width="1" fill="none"/><circle cx="929.500" cy="447.600" r="1.500" fill="#3f81c3"/><circle cx="929.500" cy="455.700" r="1.500" fill="#3f81c3"/><path d="M932,446.5H942M932,454.5H942" stroke="#8e8e8e" stroke-width="1" fill="none"/><path d="M932,449.5H938M932,457.5H938" stroke="#8e8e8e" stroke-width="1" fill="none"/><path d="M949.9,452h7.2l-3.6,4.2z" fill="#ffffff"/><text x="965.200" y="450.800" font-size="8" text-anchor="middle" fill="#3f81c3" font-family="NanumGothic,sans-serif">1</text><text x="965.200" y="459.200" font-size="8" text-anchor="middle" fill="#3f81c3" font-family="NanumGothic,sans-serif">2</text><path d="M968,446.5H978M968,454.5H978" stroke="#8e8e8e" stroke-width="1" fill="none"/><path d="M968,449.5H974M968,457.5H974" stroke="#8e8e8e" stroke-width="1" fill="none"/><path d="M986.1,452h7.2l-3.6,4.2z" fill="#ffffff"/><path d="M1090.800,455.500v-5a1.800,1.800 0 0 1 1.800,-1.800h1.500" stroke="#3f81c3" stroke-width="1.800" fill="none"/><rect x="-4.300" y="-4.300" width="8.600" height="8.600" rx="0.800" transform="translate(1099.200,452.200) rotate(-28)" fill="#f4f4f4"/><circle cx="1098.800" cy="451" r="1.300" fill="none" stroke="#777" stroke-width="0.700"/><rect x="1108.500" y="446.500" width="64.500" height="11" fill="#fff" stroke="#000" stroke-width="1.300"/><path d="M930,506.5H938M930,509.5H938M930,515.5H938M930,518.5H938" stroke="#8e8e8e" stroke-width="1" fill="none"/><path d="M941.5,504.3V511.5M938.7,507.1L941.5,504.3L944.3,507.1" stroke="#3f81c3" stroke-width="1" fill="none"/><path d="M941.5,513.5V520.2M938.7,517.4000000000001L941.5,520.2L944.3,517.4000000000001" stroke="#3f81c3" stroke-width="1" fill="none"/><path d="M955,508.5H964M955,511.5H964M955,514.5H964M955,517.5H964" stroke="#e0e0e0" stroke-width="1" fill="none"/><path d="M966.5,504V511M963.7,508.2L966.5,511L969.3,508.2" stroke="#e0e0e0" stroke-width="1" fill="none"/><path d="M966.5,513.5V520.2M963.7,516.3L966.5,513.5L969.3,516.3" stroke="#e0e0e0" stroke-width="1" fill="none"/><path d="M1068,506.5H1081M1068,518.5H1081" stroke="#8e8e8e" stroke-width="1" fill="none"/><path d="M1075,509.5H1081M1075,512.5H1081M1075,515.5H1081" stroke="#8e8e8e" stroke-width="1" fill="none"/><path d="M1066,511.5H1073M1070.2,508.7L1073,511.5L1070.2,514.3" stroke="#3f81c3" stroke-width="1" fill="none"/><path d="M1093,506.5H1106M1093,518.5H1106" stroke="#8e8e8e" stroke-width="1" fill="none"/><path d="M1100,509.5H1106M1100,512.5H1106M1100,515.5H1106" stroke="#8e8e8e" stroke-width="1" fill="none"/><path d="M1091,511.5H1098.5M1093.8,508.7L1091,511.5L1093.8,514.3" stroke="#3f81c3" stroke-width="1" fill="none"/><path d="M1118,506.5H1131" stroke="#8e8e8e" stroke-width="1" fill="none"/><path d="M1125,509.5H1131M1125,512.5H1131M1125,515.5H1131M1125,518.5H1131" stroke="#8e8e8e" stroke-width="1" fill="none"/><path d="M1116,511.5H1123M1120.2,508.7L1123,511.5L1120.2,514.3" stroke="#3f81c3" stroke-width="1" fill="none"/><path d="M934,540.500h5M936.500,540.500v7M934,547.500h5" stroke="#3f81c3" fill="none"/><path d="M929,549.5H943M929,552.5H943" stroke="#8e8e8e" stroke-width="1" fill="none"/><path d="M1067,542.5H1081M1067,551.5H1081" stroke="#8e8e8e" stroke-width="1" fill="none"/><path d="M1075,545.5H1081M1075,548.5H1081" stroke="#8e8e8e" stroke-width="1" fill="none"/><path d="M1065.500,545v5.500M1065.500,547.500h7M1072.500,545v5.500" stroke="#3f81c3" fill="none" stroke-width="1.100"/><path d="M929,574.5H943M929,577.5H943" stroke="#8e8e8e" stroke-width="1" fill="none"/><path d="M934,580.500h5M936.500,580.500v6" stroke="#3f81c3" fill="none"/><path d="M1066,576.5H1080" stroke="#8e8e8e" stroke-width="1" fill="none"/><path d="M1066,579.5H1072M1066,582.5H1072" stroke="#8e8e8e" stroke-width="1" fill="none"/><path d="M1073.500,579v5.500M1073.500,581.500h7M1080.500,579v5.500" stroke="#3f81c3" fill="none" stroke-width="1.100"/></svg><div class="t" style="left:932px;top:198.8px;font-size:12.6px;color:#e8e8e8;word-spacing:-1px;">기본 스타일</div><div class="t" style="left:932px;top:266.3px;font-size:12.6px;color:#e8e8e8;"><span style="font-size:0.95em">Neo</span>둥근모</div><div class="t" style="left:1114.5px;top:265.9px;font-size:13.5px;color:#e8e8e8;">20</div><div class="abs" style="left:924px;top:472px;width:258px;height:1px;background:#4a4a4a;"></div><div class="t" style="left:924px;top:479.6px;font-size:13px;color:#e8e8e8;">간격<span style="font-size:0.95em">(S):</span></div><div class="t" style="left:1061px;top:479.6px;font-size:13px;color:#e8e8e8;">들여쓰기<span style="font-size:0.95em">(I):</span></div><div class="abs" style="left:951.5px;top:534px;width:40px;height:27px;overflow:hidden;"><div class="t" style="left:0;top:6.3px;font-size:13.500px;color:#e8e8e8;">0.00 cm</div></div><div class="abs" style="left:991.5px;top:534px;width:28px;height:27px;background:#606060;box-shadow:0 0 0 1px #2b2b2b;"></div><div class="abs" style="left:1021.0px;top:534px;width:28px;height:27px;background:#606060;box-shadow:0 0 0 1px #2b2b2b;"></div><svg style="left:991.5px;top:534px" width="58" height="27"><path d="M9,13.500h10M38.500,13.500h11M44,8v11" stroke="#f4f4f4" stroke-width="1"/></svg><div class="abs" style="left:1089px;top:534px;width:39px;height:27px;overflow:hidden;"><div class="t" style="left:0;top:6.3px;font-size:13.500px;color:#e8e8e8;">0.00 cm</div></div><div class="abs" style="left:1128px;top:534px;width:28px;height:27px;background:#606060;box-shadow:0 0 0 1px #2b2b2b;"></div><div class="abs" style="left:1157.5px;top:534px;width:28px;height:27px;background:#606060;box-shadow:0 0 0 1px #2b2b2b;"></div><svg style="left:1128px;top:534px" width="58" height="27"><path d="M9,13.500h10M38.500,13.500h11M44,8v11" stroke="#f4f4f4" stroke-width="1"/></svg><div class="abs" style="left:918px;top:568px;width:265px;height:16.500px;overflow:hidden;"><div class="abs" style="left:-918px;top:-568px;"><div class="abs" style="left:951.5px;top:568px;width:40px;height:27px;overflow:hidden;"><div class="t" style="left:0;top:6.3px;font-size:13.500px;color:#e8e8e8;">0.00 cm</div></div><div class="abs" style="left:991.5px;top:568px;width:28px;height:27px;background:#606060;box-shadow:0 0 0 1px #2b2b2b;"></div><div class="abs" style="left:1021.0px;top:568px;width:28px;height:27px;background:#606060;box-shadow:0 0 0 1px #2b2b2b;"></div><svg style="left:991.5px;top:568px" width="58" height="27"><path d="M9,13.500h10M38.500,13.500h11M44,8v11" stroke="#f4f4f4" stroke-width="1"/></svg><div class="abs" style="left:1089px;top:568px;width:39px;height:27px;overflow:hidden;"><div class="t" style="left:0;top:6.3px;font-size:13.500px;color:#e8e8e8;">0.00 cm</div></div><div class="abs" style="left:1128px;top:568px;width:28px;height:27px;background:#606060;box-shadow:0 0 0 1px #2b2b2b;"></div><div class="abs" style="left:1157.5px;top:568px;width:28px;height:27px;background:#606060;box-shadow:0 0 0 1px #2b2b2b;"></div><svg style="left:1128px;top:568px" width="58" height="27"><path d="M9,13.500h10M38.500,13.500h11M44,8v11" stroke="#f4f4f4" stroke-width="1"/></svg></div></div><div class="abs" style="left:1182px;top:158px;width:11px;height:426px;background:#333333;"></div><div class="abs" style="left:1185.5px;top:163px;width:4px;height:371px;background:#6a6a6a;border-radius:2px;"></div><div class="abs" style="left:906px;top:587px;width:326px;height:2px;background:#777777;"></div><div class="abs" style="left:1193px;top:132px;width:1px;height:452px;background:#252525;"></div><div class="abs" style="left:1194px;top:132px;width:40px;height:452px;background:#333333;"></div><svg style="left:0;top:0" width="1234" height="586" viewBox="0 0 1234 586"><rect x="1212.500" y="141.3" width="1.500" height="1.500" fill="#5f5f5f"/><rect x="1212.500" y="146.3" width="1.500" height="1.500" fill="#5f5f5f"/><rect x="1212.500" y="151.3" width="1.500" height="1.500" fill="#5f5f5f"/><path d="M1202,166.500h22" stroke="#2a2a2a"/><rect x="1197.300" y="170.500" width="31.500" height="31" rx="5" fill="#333333" stroke="#d4d4d4" stroke-width="1"/><rect x="1203.500" y="176" width="19.500" height="19" fill="#f8f8f8"/><rect x="1203.500" y="176" width="19.500" height="4" fill="#858585"/><path d="M1207.500,185.500h11.500M1207.500,189.500h11.500" stroke="#707070" stroke-width="0.900"/><rect x="1214" y="184" width="1.600" height="3" fill="#707070"/><rect x="1210.500" y="188" width="1.600" height="3" fill="#3f81c3"/><path d="M1205,212h11.0l4.5,4.5v14.0h-15.5z" fill="#ffffff"/><path d="M1216.0,212v4.5h4.5z" fill="#bbbbbb"/><text x="1207.300" y="262.300" font-size="21" text-anchor="middle" fill="#707070" stroke="#707070" stroke-width="0.300" font-family="Liberation Sans,sans-serif" font-style="italic">A</text><text x="1214.800" y="263.800" font-size="21.500" text-anchor="middle" fill="#3f81c3" stroke="#333333" stroke-width="2" paint-order="stroke" font-family="Liberation Sans,sans-serif">A</text><text x="1214.800" y="263.800" font-size="21.500" text-anchor="middle" fill="#3f81c3" stroke="#3f81c3" stroke-width="0.700" font-family="Liberation Sans,sans-serif">A</text><path d="M1206.300,265.500h16" stroke="#3f81c3" stroke-width="1.200"/><path d="M1202.300,298v-14l1.500,-1h6l2,-2h9.500v6.500z" fill="#eac282"/><path d="M1204.300,288v-4h17v4z" fill="#fff"/><path d="M1202.300,298.400l2.700,-11.400h19.800l-2.700,11.400z" fill="#eac282"/><rect x="1210.800" y="288.700" width="12" height="12" fill="#fff" stroke="#8a8a8a" stroke-width="0.900"/><circle cx="1214" cy="292" r="1.400" fill="#eac282"/><path d="M1211.500,300l3,-3.500l1.800,1.300l3,-3.600l2.800,3.300v2.500z" fill="#3f81c3"/><circle cx="1213" cy="326" r="9" fill="#fff"/><path d="M1218.300,320.700l-3.300,7.300l-7.300,3.300l3.300,-7.300z" fill="#3f81c3"/><circle cx="1213" cy="326" r="1.100" fill="#fff"/></svg>
<div class="abs" style="left:0px;top:589px;width:1232px;height:1px;background:#727272;"></div><div class="abs" style="left:0px;top:590px;width:1234px;height:21px;background:#333333;"></div><div class="abs" style="left:140px;top:593px;width:1px;height:14px;background:#4c4c4c;"></div><div class="abs" style="left:407px;top:593px;width:1px;height:14px;background:#4c4c4c;"></div><div class="abs" style="left:548px;top:593px;width:1px;height:14px;background:#4c4c4c;"></div><div class="abs" style="left:716px;top:593px;width:1px;height:14px;background:#4c4c4c;"></div><div class="abs" style="left:784px;top:593px;width:1px;height:14px;background:#4c4c4c;"></div><div class="abs" style="left:813px;top:593px;width:1px;height:14px;background:#4c4c4c;"></div><div class="abs" style="left:842px;top:593px;width:1px;height:14px;background:#4c4c4c;"></div><div class="abs" style="left:871px;top:593px;width:1px;height:14px;background:#4c4c4c;"></div><div class="abs" style="left:964px;top:593px;width:1px;height:14px;background:#4c4c4c;"></div><div class="abs" style="left:1040px;top:593px;width:1px;height:14px;background:#4c4c4c;"></div><div class="abs" style="left:1183px;top:593px;width:1px;height:14px;background:#4c4c4c;"></div><div class="t" style="left:11.5px;top:594.1px;font-size:12px;color:#e4e4e4;"><span style="font-size:1em">1 / 1</span> 페이지</div><div class="t" style="left:149px;top:593.8px;font-size:12.6px;color:#e4e4e4;">9 words, 13 characters</div><div class="t" style="left:416px;top:594.2px;font-size:11.8px;color:#e4e4e4;word-spacing:-1px;">기본 스타일</div><div class="t" style="left:590px;top:594.1px;font-size:12px;color:#e4e4e4;">한국어<span style="font-size:0.95em">(</span>대한민국<span style="font-size:0.95em">)</span></div><div class="t" style="left:1192px;top:594.0px;font-size:12.3px;color:#e4e4e4;">100%</div><svg style="left:0;top:0" width="1234" height="611" viewBox="0 0 1234 611"><rect x="793" y="597.500" width="8" height="5" fill="#f0f0f0"/><path d="M803,595.500h3.500M804.750,595.500v10M803,605.500h3.500" stroke="#777" fill="none"/><path d="M824.500,596h8l1.500,1.500v8h-9.500z" fill="#e8556a"/><rect x="826.500" y="596.500" width="5" height="3" fill="#fff"/><rect x="826.500" y="601.500" width="5.500" height="4" fill="#fff"/><rect x="827.500" y="602.500" width="1.500" height="3" fill="#e8556a"/><path d="M977.800,596.500h4.500l2.700,2.700v6.300h-7.200z" fill="#fff" stroke="#3f81c3" stroke-width="1"/><path d="M991,596h5l3,3v6.500h-8z" fill="#fff"/><path d="M1001.500,596h5l3,3v6.500h-8z" fill="#fff"/><path d="M1015,598l3,-2h4.500v9.500h-7.500z" fill="#fff"/><path d="M1023.500,596h4.500l3,2v7.500h-7.500z" fill="#fff"/><path d="M1050,601h9" stroke="#666" stroke-width="1.300"/><path d="M1066,601h96" stroke="#e0e0e0" stroke-width="1"/><path d="M1074.500,598v6" stroke="#e0e0e0"/><rect x="1112" y="596" width="3" height="10" fill="#8a8a8a"/><path d="M1167,601h9M1171.500,596.500v9" stroke="#666" stroke-width="1.300"/></svg>
<div class="abs" style="left:89px;top:98px;width:198px;height:35.5px;background:rgba(68,68,68,0.94);border-radius:5px;"></div><div class="t" style="left:99px;top:109.8px;font-size:12.7px;color:#e8e8e8;"><span style="font-size:0.96em">PDF</span>파일 형식으로 직접 내보내기</div>
<div class="abs" style="left:0px;top:0px;width:1234px;height:1px;background:#111111;"></div><div class="abs" style="left:1px;top:1px;width:1232px;height:1px;background:#5c5c5c;"></div><div class="abs" style="left:0px;top:0px;width:1px;height:611px;background:#151515;"></div><div class="abs" style="left:1233px;top:0px;width:1px;height:611px;background:#151515;"></div><div class="abs" style="left:0px;top:610px;width:1234px;height:1px;background:#111111;"></div><svg style="left:0;top:0" width="1234" height="6" viewBox="0 0 1234 6"><path d="M0,0h5.500l-5.500,5.500z" fill="#2a0a26"/><path d="M0,0h4.200l-4.200,4.200z" fill="#a8d0cc"/><path d="M1234,0h-5.500l5.500,5.500z" fill="#2a0a26"/><path d="M1234,0h-4.200l4.200,4.200z" fill="#a8d0cc"/></svg><div class="abs" style="left:147px;top:49px;width:45px;height:44px;background:transparent;border:3px solid #ff0000;"></div><svg style="left:178px;top:76px" width="14" height="21" viewBox="0 0 14 21"><path d="M1.500,1.500v15.500l3.700,-3.500l2.600,6l2.400,-1l-2.600,-5.800h5z" fill="#111" stroke="#fff" stroke-width="1.100" stroke-linejoin="round"/></svg>
</div></body></html>
